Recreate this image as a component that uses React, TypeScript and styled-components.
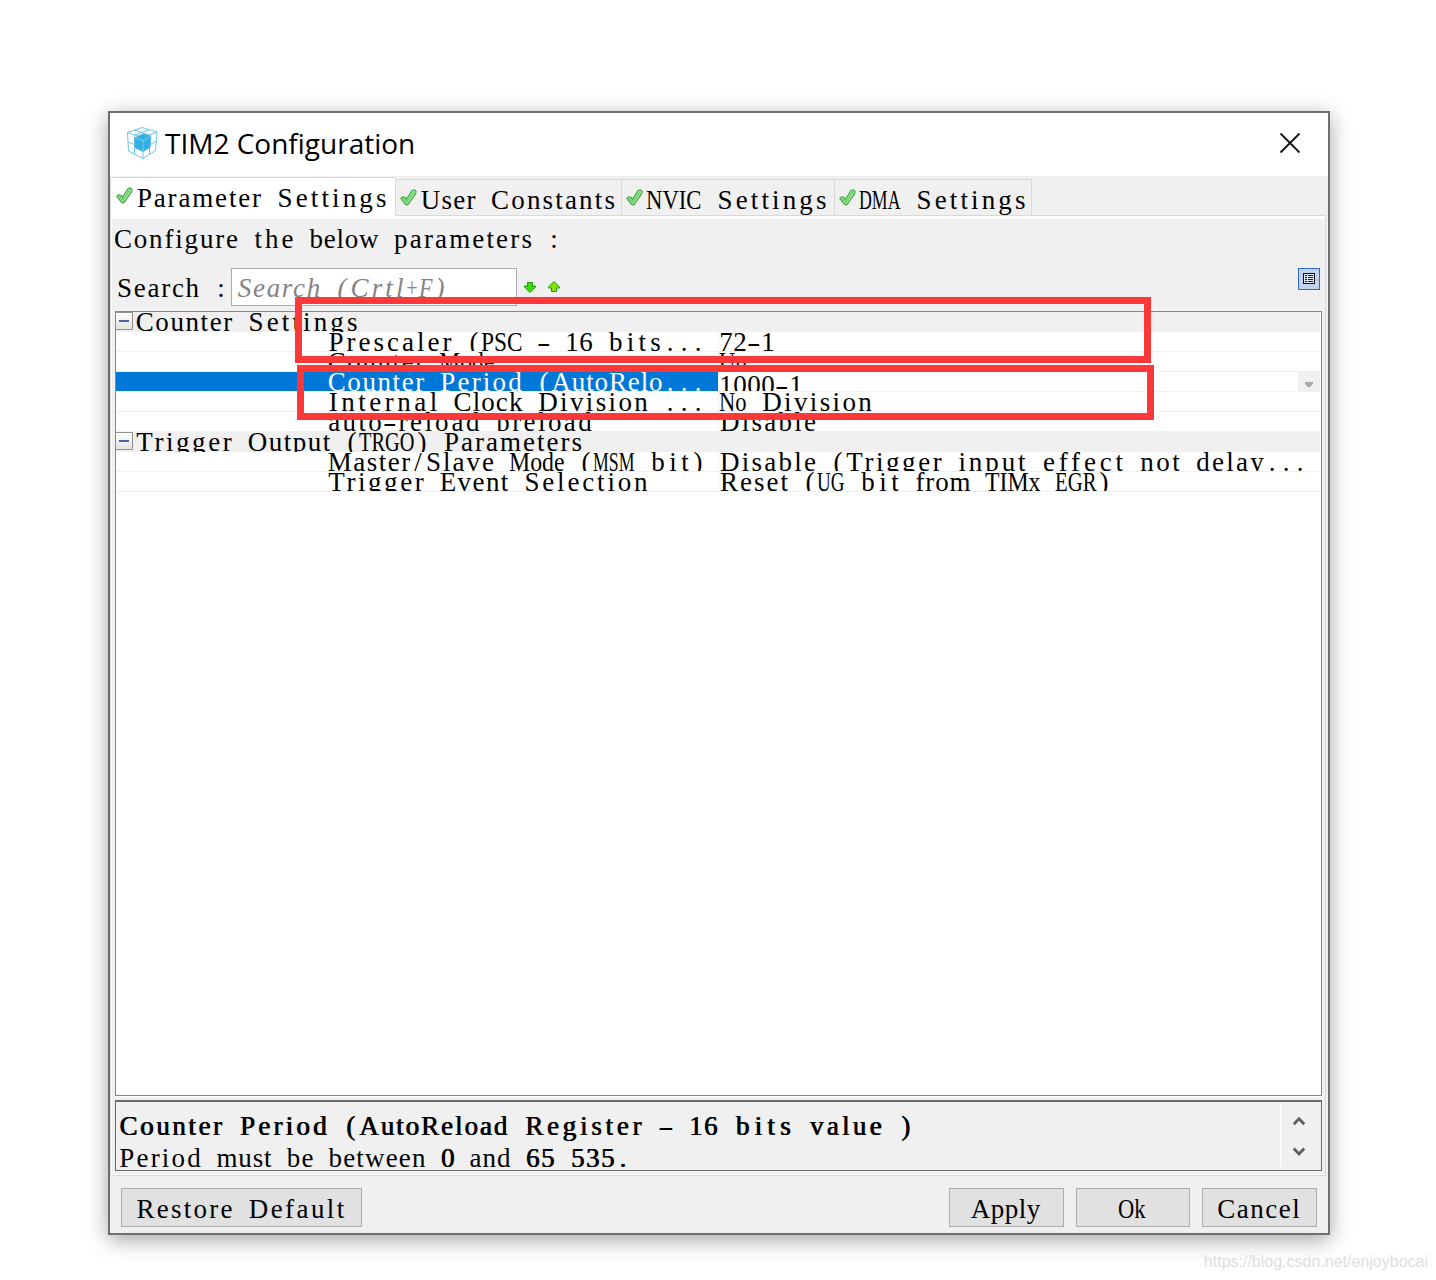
import { Fragment } from 'react';
import styled, { createGlobalStyle } from 'styled-components';

const SERIF = '"Liberation Serif", "Noto Sans CJK SC", serif';
const FONT_SIZE = 27;
const CELL = 14;

const GlobalStyle = createGlobalStyle`
  body {
    margin: 0;
    background: #fff;
  }
  * {
    box-sizing: border-box;
  }
`;

const Page = styled.div`
  position: relative;
  width: 1436px;
  height: 1280px;
  padding: 111px 0 0 108px;
  overflow: hidden;
`;

const Window = styled.div`
  display: flex;
  flex-direction: column;
  width: 1222px;
  height: 1124px;
  border: 2px solid #6f6f6f;
  background: #f0f0f0;
  box-shadow: 0 5px 20px rgba(0, 0, 0, 0.36);
`;

const TitleBar = styled.div`
  display: flex;
  align-items: center;
  height: 63px;
  padding: 0 27px 3px 16px;
  background: #fff;
`;

const Title = styled.span`
  flex: 1;
  margin-left: 7px;
  font-family: 'Open Sans', 'Noto Sans', sans-serif;
  font-size: 28px;
  line-height: 38px;
  color: #000;
`;

const GridText = styled.span<{ $bold?: boolean; $italic?: boolean }>`
  font-family: ${SERIF};
  font-size: ${FONT_SIZE}px;
  font-style: ${(p) => (p.$italic ? 'italic' : 'normal')};
  line-height: 30px;
  white-space: pre;
  word-spacing: ${(p) => (p.$bold ? CELL + 1 : CELL) - FONT_SIZE / 4}px;
  text-shadow: ${(p) => (p.$bold ? '0.8px 0 0 currentColor' : 'none')};
`;

const Token = styled.span<{ $squeezed?: boolean }>`
  display: ${(p) => (p.$squeezed ? 'inline-block' : 'inline')};
  transform-origin: 0 50%;
`;

const TabStrip = styled.div`
  display: flex;
  align-items: flex-end;
  height: 40px;
  margin-right: 2px;
  box-shadow: inset 0 -1px 0 #d9d9d9;
`;

const Tab = styled.div<{ $active?: boolean; $width: number }>`
  display: flex;
  align-items: flex-start;
  width: ${(p) => p.$width}px;
  height: ${(p) => (p.$active ? 39 : 37)}px;
  padding: ${(p) => (p.$active ? '5px 0 0 5px' : '5px 0 0 4px')};
  border: 1px solid #d9d9d9;
  border-right-width: ${(p) => (p.$active ? 0 : 1)}px;
  border-bottom-width: ${(p) => (p.$active ? 0 : 1)}px;
  background: ${(p) => (p.$active ? '#fff' : '#f0f0f0')};

  & + & {
    margin-right: -1px;
  }

  svg {
    flex: none;
    margin: 4px 3px 0 0;
  }
`;

const Panel = styled.div`
  display: flex;
  flex-direction: column;
  width: 1216px;
  height: 960px;
  padding: 3px 3px 0 4px;
  border: solid #d9d9d9;
  border-width: 0 1px 1px;
  box-shadow: inset 1px 3px 0 #fff, inset 0 -1px 0 #fff;
`;

const Intro = styled.div`
  display: flex;
  height: 49px;
  padding: 5px 0 0 0;
  margin-left: -2px;
`;

const SearchRow = styled.div`
  display: flex;
  align-items: flex-start;
  height: 43px;
  padding-left: 1px;
`;

const SearchLabel = styled.label`
  display: flex;
  width: 115px;
  padding-top: 5px;
`;

const SearchField = styled.div`
  display: flex;
  width: 286px;
  height: 38px;
  padding: 4px 0 0 5px;
  margin-right: 6px;
  border: 1px solid #abadb3;
  background: #fff;
  color: #848484;
`;

const Arrows = styled.div`
  display: flex;
  flex: 1;
  gap: 10px;
  padding-top: 12px;
`;

const ListButton = styled.div`
  display: flex;
  align-items: center;
  justify-content: center;
  width: 22px;
  height: 22px;
  margin-right: 2px;
  border: 1px solid #316ac5;
  background: #c1d2ee;
`;

const Table = styled.div`
  width: 1207px;
  height: 785px;
  border: 1px solid #828790;
  background: #fff;
  box-shadow: 0 1px 0 #fff;
`;

const CategoryRow = styled.div`
  display: flex;
  height: 20px;
  margin-right: 1px;
  overflow: hidden;
  background: #f0f0f0;

  ${GridText} {
    margin-left: 2px;
    line-height: 21px;
  }
`;

const Toggle = styled.div`
  display: flex;
  align-items: center;
  justify-content: center;
  width: 17px;
  height: 18px;
  border: solid #919191;
  border-width: 1px 1px 1px 0;
  border-radius: 1px;
  background: linear-gradient(#fff, #e4e4e4);

  &::before {
    content: '';
    width: 10px;
    height: 2px;
    background: #4b63a7;
  }
`;

const Row = styled.div`
  display: flex;
  height: 20px;
  margin-right: 1px;
  border-bottom: 1px solid #f0f0f0;

  ${GridText} {
    line-height: 21px;
  }
`;

const NameCell = styled.div<{ $selected?: boolean }>`
  display: flex;
  width: 602px;
  height: 19px;
  padding-left: 211px;
  overflow: hidden;
  background: ${(p) => (p.$selected ? '#0078d7' : 'transparent')};
  color: ${(p) => (p.$selected ? '#fff' : '#000')};
`;

const ValueCell = styled.div<{ $editing?: boolean }>`
  display: flex;
  flex: 1;
  height: 19px;
  padding: ${(p) => (p.$editing ? 3 : 0)}px 0 0 0;
  border-left: 1px solid #f0f0f0;
  overflow: hidden;
`;

const DropButton = styled.div`
  display: flex;
  align-items: center;
  justify-content: center;
  width: 22px;
  height: 19px;
  padding-top: 5px;
  background: #f0f0f0;
`;

const Description = styled.div`
  display: flex;
  width: 1207px;
  height: 71px;
  margin-top: 4px;
  border: 1px solid #6a6c69;
  border-top-width: 2px;
`;

const DescriptionText = styled.div`
  display: flex;
  flex: 1;
  flex-direction: column;
  gap: 2px;
  padding: 9px 0 0 2px;
  overflow: hidden;
`;

const ScrollBar = styled.div`
  display: flex;
  flex-direction: column;
  align-items: center;
  gap: 20px;
  width: 41px;
  height: 63px;
  margin-top: 2px;
  padding: 12px 4px 0 0;
  border-left: 1px solid #fff;
`;

const Footer = styled.div`
  display: flex;
  gap: 12px;
  padding: 12px 11px 0;
`;

const Button = styled.div<{ $width: number }>`
  display: flex;
  justify-content: center;
  width: ${(p) => p.$width}px;
  height: 39px;
  padding: 5px 2px 0 0;
  border: 1px solid #adadad;
  background: #e1e1e1;
`;

const Spacer = styled.div`
  flex: 1;
`;

const Marker = styled.div<{ $x: number; $y: number; $w: number; $h: number }>`
  position: absolute;
  left: ${(p) => p.$x}px;
  top: ${(p) => p.$y}px;
  width: ${(p) => p.$w}px;
  height: ${(p) => p.$h}px;
  border: 7px solid #fc3838;
`;

const Watermark = styled.span`
  position: absolute;
  right: 8px;
  bottom: 8px;
  font-family: 'Liberation Sans', sans-serif;
  font-size: 16px;
  line-height: 20px;
  color: #dedede;
`;

const ctx = document.createElement('canvas').getContext('2d')!;

function measure(token: string, italic?: boolean) {
  ctx.font = `${italic ? 'italic ' : ''}${FONT_SIZE}px ${SERIF}`;
  return ctx.measureText(token).width;
}

// Spreads a token over whole character cells, so columns line up as in a fixed pitch font.
// Wide capitals are condensed, everything else gets letter spacing.
function fitToken(token: string, cell: number, natural: number) {
  const target = cell * token.length;
  if (token === '-' || natural > target) {
    return {
      width: `${target}px`,
      transform: `scaleX(${(target - 0.5) / natural})`,
    };
  }
  const spacing = (target - natural) / token.length;
  return {
    letterSpacing: `${spacing}px`,
    marginLeft: `${spacing / 2}px`,
    marginRight: `${-spacing / 2}px`,
  };
}

interface MonoProps {
  text: string;
  bold?: boolean;
  italic?: boolean;
}

function Mono({ text, bold, italic }: MonoProps) {
  const cell = bold ? CELL + 1 : CELL;
  const tokens = text.match(/[A-Za-z0-9]+|\s+|[^A-Za-z0-9\s]/g) || [];
  return (
    <GridText $bold={bold} $italic={italic}>
      {tokens.map((token, i) => {
        if (!token.trim()) {
          return <Fragment key={i}>{token}</Fragment>;
        }
        const natural = measure(token, italic);
        return (
          <Token
            key={i}
            $squeezed={token === '-' || natural > cell * token.length}
            style={fitToken(token, cell, natural)}
          >
            {token}
          </Token>
        );
      })}
    </GridText>
  );
}

function CubeIcon() {
  return (
    <svg width="32" height="34" viewBox="0 0 32 34" fill="none" stroke="#74c4e4" strokeWidth="1">
      <path d="M1.500 6.500 16 1.500 31 6l-1.500 18.500L17 32.500 2.500 25z" />
      <path d="m1.500 6.500 15.500 5L31 6M17 11.500v21M8.500 4l15 5v19.500M23.500 3.700l-15 5.300v19.500M2 16l15 6 13-6.500" />
      <path d="m8.500 11.500 8.500-4 8 2.500-.5 11.500-7.500 4.500-8-4z" fill="#35b0e6" stroke="none" />
      <path d="m8.500 11.500 8.500 3 8-4.500M17 14.500V26" stroke="#8ad3f1" strokeWidth=".8" />
    </svg>
  );
}

function CloseIcon() {
  return (
    <svg width="22" height="22" viewBox="0 0 22 22" stroke="#111" strokeWidth="1.800">
      <path d="m1.500 1.500 19 19M20.500 1.500l-19 19" />
    </svg>
  );
}

function CheckIcon() {
  return (
    <svg width="17" height="17" viewBox="0 0 17 17">
      <path
        d="M.8 9.300 2.600 7.800 4.800 8.200 6.500 10.300 12 1.500 14.300.8 16 2.200 15.700 4.600 9.200 14 7.300 16 5.500 15.300z"
        fill="#a2ea9a"
        stroke="#37a63c"
        strokeWidth="1.100"
        strokeLinejoin="round"
      />
      <path d="m3 9.500 3.800 3.500L14 2.700" fill="none" stroke="#68c765" strokeWidth="1.200" />
    </svg>
  );
}

function ArrowIcon({ up }: { up?: boolean }) {
  return (
    <svg width="14" height="14" viewBox="0 0 14 14">
      <path
        d={up ? 'M7 1.500 12.500 7v1H9.500v3.500h-5V8h-3V7z' : 'M7 12.500 12.500 7V6H9.500V2.500h-5V6h-3v1z'}
        fill={up ? '#8be200' : '#3fd800'}
        stroke="#12a012"
      />
    </svg>
  );
}

function ListIcon() {
  return (
    <svg width="12" height="12" viewBox="0 0 12 12" shapeRendering="crispEdges">
      <rect x=".5" y=".5" width="11" height="10" fill="#dfe8f7" stroke="#111" />
      <path d="M2 2.500h2M2 4.500h2M2 6.500h2M2 8.500h2" stroke="#111" />
      <path d="M5 2.500h5M5 4.500h5M5 6.500h5M5 8.500h5" stroke="#16168c" />
    </svg>
  );
}

function Chevron({ down }: { down?: boolean }) {
  return (
    <svg width="12" height="10" viewBox="0 0 12 10" fill="none" stroke="#606060" strokeWidth="2.800">
      <path d={down ? 'M.8 2.500 6 8l5.200-5.500' : 'M.8 8.200 6 2.700l5.200 5.500'} />
    </svg>
  );
}

const tabs = [
  { label: 'Parameter Settings', width: 285, active: true },
  { label: 'User Constants', width: 227 },
  { label: 'NVIC Settings', width: 214 },
  { label: 'DMA Settings', width: 198 },
];

const groups = [
  {
    title: 'Counter Settings',
    rows: [
      { name: 'Prescaler (PSC - 16 bits...', value: '72-1' },
      { name: 'Counter Mode', value: 'Up' },
      { name: 'Counter Period (AutoRelo...', value: '1000-1', selected: true },
      { name: 'Internal Clock Division ...', value: 'No Division' },
      { name: 'auto-reload preload', value: 'Disable' },
    ],
  },
  {
    title: 'Trigger Output (TRGO) Parameters',
    rows: [
      { name: 'Master/Slave Mode (MSM bit)', value: 'Disable (Trigger input effect not delay...' },
      { name: 'Trigger Event Selection', value: 'Reset (UG bit from TIMx_EGR)' },
    ],
  },
];

export default function App() {
  return (
    <>
      <GlobalStyle />
      <Page>
        <Window>
          <TitleBar>
            <CubeIcon />
            <Title>TIM2 Configuration</Title>
            <CloseIcon />
          </TitleBar>
          <TabStrip>
            {tabs.map((tab) => (
              <Tab key={tab.label} $active={tab.active} $width={tab.width}>
                <CheckIcon />
                <Mono text={tab.label} />
              </Tab>
            ))}
          </TabStrip>
          <Panel>
            <Intro>
              <Mono text="Configure the below parameters :" />
            </Intro>
            <SearchRow>
              <SearchLabel>
                <Mono text="Search :" />
              </SearchLabel>
              <SearchField>
                <Mono text="Search (Crtl+F)" italic />
              </SearchField>
              <Arrows>
                <ArrowIcon />
                <ArrowIcon up />
              </Arrows>
              <ListButton>
                <ListIcon />
              </ListButton>
            </SearchRow>
            <Table>
              {groups.map((group) => (
                <Fragment key={group.title}>
                  <CategoryRow>
                    <Toggle />
                    <Mono text={group.title} />
                  </CategoryRow>
                  {group.rows.map((row) => (
                    <Row key={row.name}>
                      <NameCell $selected={row.selected}>
                        <Mono text={row.name} />
                      </NameCell>
                      <ValueCell $editing={row.selected}>
                        <Mono text={row.value} />
                      </ValueCell>
                      {row.selected && (
                        <DropButton>
                          <svg width="8" height="5" viewBox="0 0 8 5">
                            <path d="M0 0h8v2L5 5H3L0 2z" fill="#a8a8a8" />
                          </svg>
                        </DropButton>
                      )}
                    </Row>
                  ))}
                </Fragment>
              ))}
            </Table>
            <Description>
              <DescriptionText>
                <Mono text="Counter Period (AutoReload Register - 16 bits value )" bold />
                <span>
                  <Mono text="Period must be between " />
                  <Mono text="0" bold />
                  <Mono text=" and " />
                  <Mono text="65 535." bold />
                </span>
              </DescriptionText>
              <ScrollBar>
                <Chevron />
                <Chevron down />
              </ScrollBar>
            </Description>
          </Panel>
          <Footer>
            <Button $width={241}>
              <Mono text="Restore Default" />
            </Button>
            <Spacer />
            <Button $width={115}>
              <Mono text="Apply" />
            </Button>
            <Button $width={114}>
              <Mono text="Ok" />
            </Button>
            <Button $width={115}>
              <Mono text="Cancel" />
            </Button>
          </Footer>
        </Window>
        <Marker $x={295} $y={297} $w={856} $h={66} />
        <Marker $x={297} $y={365} $w={857} $h={55} />
        <Watermark>https://blog.csdn.net/enjoybocai</Watermark>
      </Page>
    </>
  );
}
